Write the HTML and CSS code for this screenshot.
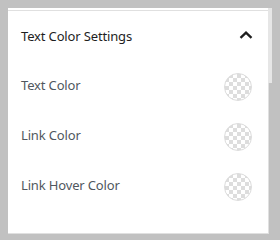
FILE: index.html
```html
<!DOCTYPE html>
<html>
<head>
<meta charset="utf-8">
<link rel="stylesheet" href="styles.css">
</head>
<body>
<div class="panel">
  <div class="scroll-thumb"></div>
  <div class="panel-body">
    <div class="panel-header">
      <span class="panel-title">Text Color Settings</span>
      <svg class="chevron" width="14" height="10" viewBox="0 0 14 10"><polyline points="1.5,7.8 7,2.6 12.5,7.8" fill="none" stroke="#1e1e1e" stroke-width="2.3"/></svg>
    </div>
    <div class="row"><span class="label">Text Color</span><span class="swatch"></span></div>
    <div class="row"><span class="label">Link Color</span><span class="swatch"></span></div>
    <div class="row"><span class="label">Link Hover Color</span><span class="swatch"></span></div>
  </div>
</div>
</body>
</html>
```

FILE: styles.css
```css
html, body {
  margin: 0;
  padding: 0;
  background: #c1c1c1;
}
body {
  padding: 8px;
  font-family: "Noto Sans", "Open Sans", sans-serif;
}
.panel {
  position: relative;
  width: 260px;
  height: 223px;
  background: #fff;
  border-right: 1px solid #e0e0e0;
  border-bottom: 1px solid #e0e0e0;
  padding-top: 2px;
  box-sizing: content-box;
}
.scroll-thumb {
  position: absolute;
  top: 0;
  right: -4px;
  width: 4px;
  height: 75px;
  background: #e6e6e6;
}
.panel-body {
  border-top: 1px solid #e0e0e0;
}
.panel-header {
  height: 49px;
  display: flex;
  align-items: center;
  justify-content: space-between;
  padding: 0 15px 0 13px;
}
.panel-title {
  font-size: 13px;
  letter-spacing: -0.15px;
  color: #1e1e1e;
}
.chevron {
  display: block;
  margin-bottom: 2px;
}
.row {
  height: 50px;
  display: flex;
  align-items: center;
  justify-content: space-between;
  padding: 0 16px 0 13px;
}
.label {
  font-size: 13px;
  letter-spacing: -0.15px;
  color: #50575e;
}
.swatch {
  width: 26px;
  height: 26px;
  border-radius: 50%;
  border: 1px solid #dcdcdc;
  margin-top: 3px;
  background-color: #fff;
  background-image:
    linear-gradient(45deg, #ddd 25%, transparent 25%, transparent 75%, #ddd 75%),
    linear-gradient(45deg, #ddd 25%, transparent 25%, transparent 75%, #ddd 75%);
  background-size: 8px 8px;
  background-position: 0 0, 4px 4px;
}
```
